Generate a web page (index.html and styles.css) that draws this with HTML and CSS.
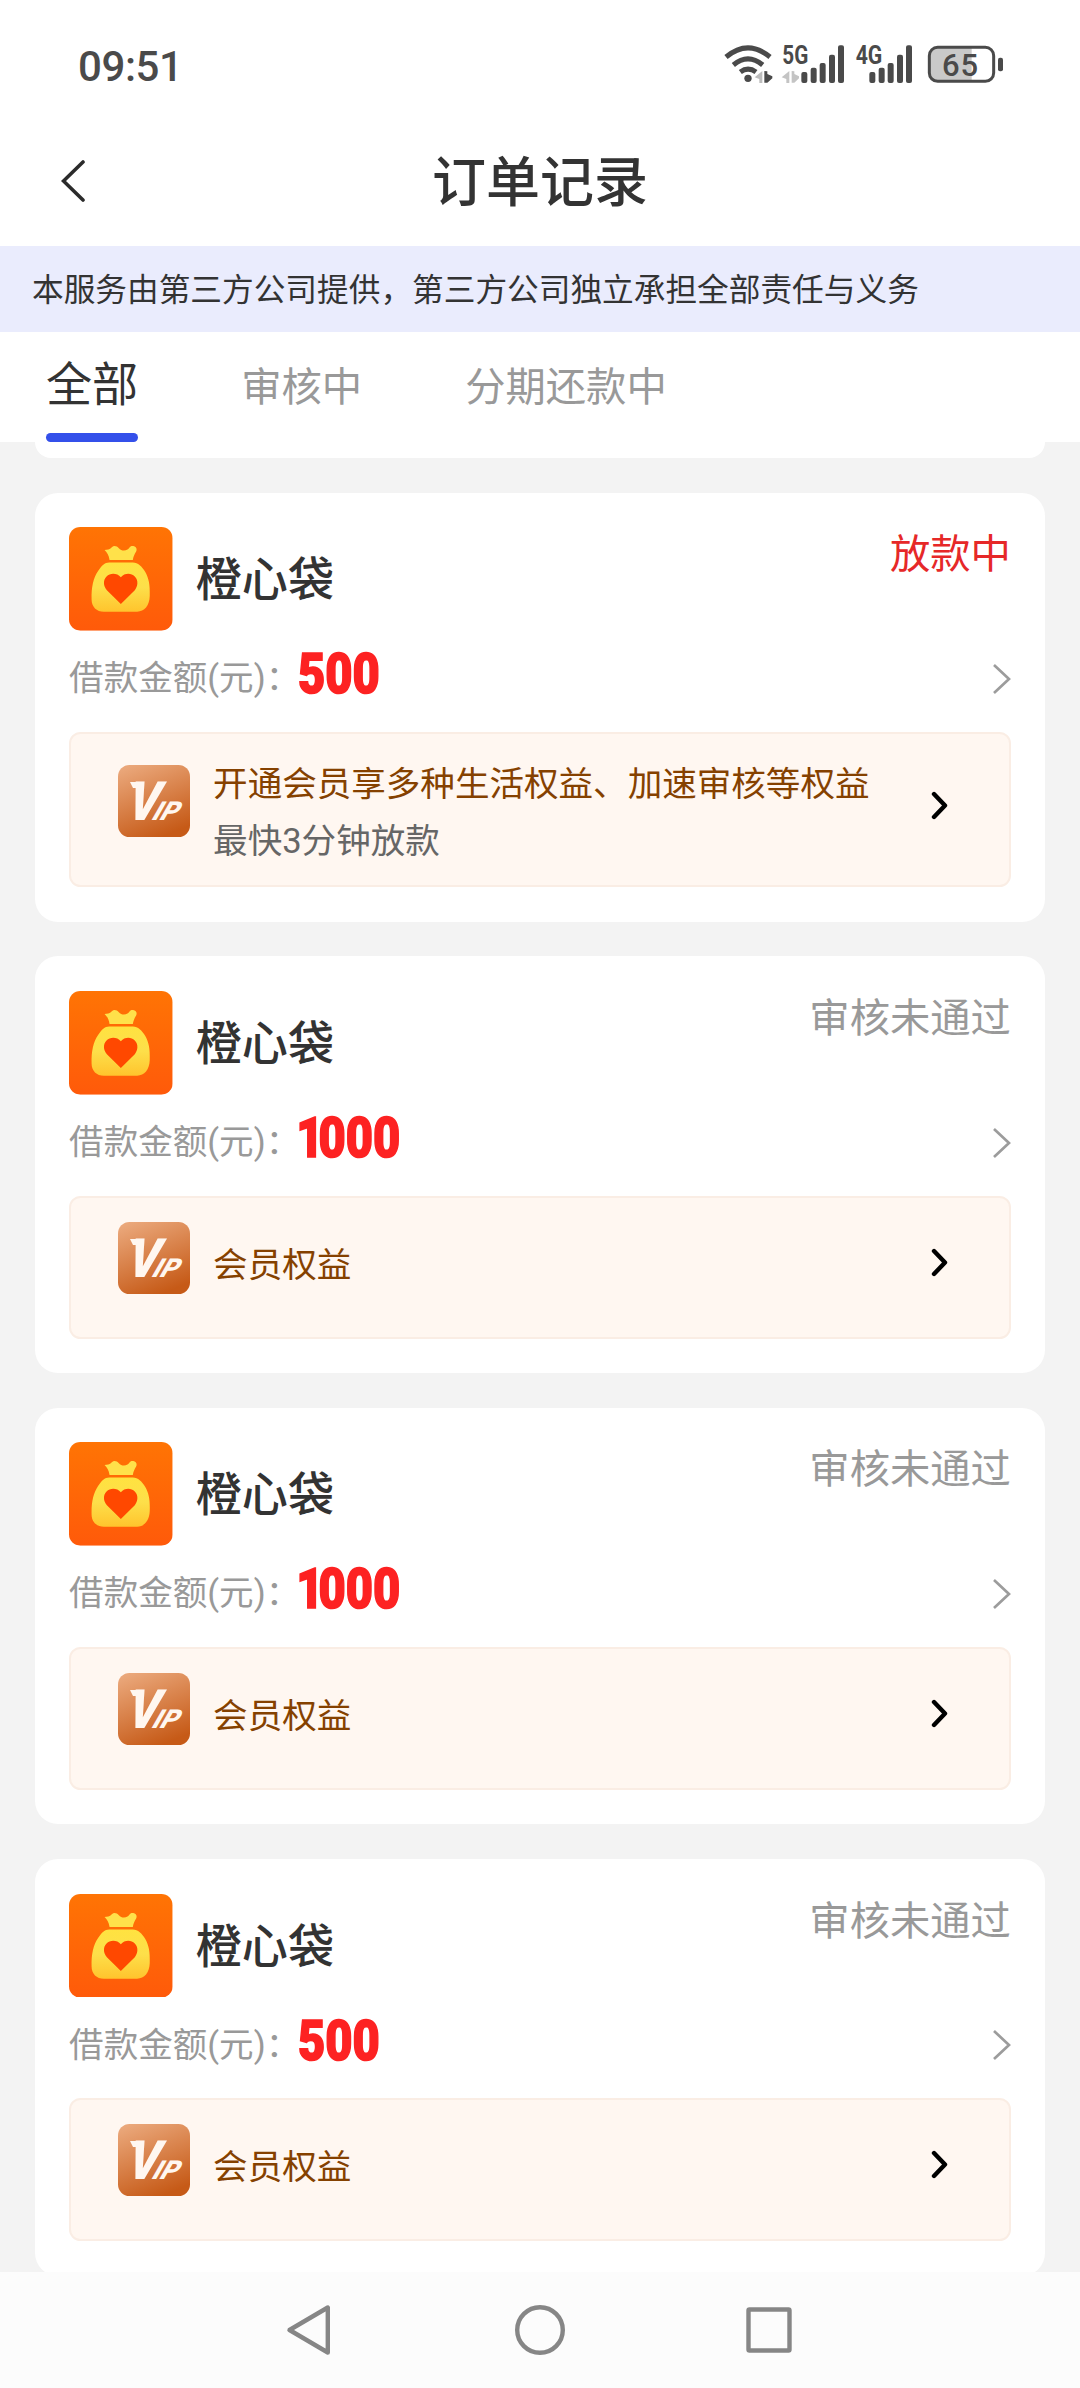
FILE: index.html
```html
<!DOCTYPE html>
<html lang="zh-CN">
<head>
<meta charset="utf-8">
<title>订单记录</title>
<link rel="stylesheet" href="styles.css">
</head>
<body>
<svg class="defs" aria-hidden="true">
  <defs>
    <linearGradient id="bag-bg" x1="0" y1="0" x2="0" y2="1"><stop offset="0" stop-color="#ff7404"/><stop offset="1" stop-color="#ff5a0a"/></linearGradient>
    <linearGradient id="bag-fill" x1="0" y1="0" x2="0" y2="1"><stop offset="0" stop-color="#ffe240"/><stop offset=".5" stop-color="#fddf4a"/><stop offset="1" stop-color="#ffc42d"/></linearGradient>
    <linearGradient id="vip-bg" x1="0.2" y1="0" x2="0.6" y2="1"><stop offset="0" stop-color="#eaa77a"/><stop offset="1" stop-color="#c65a17"/></linearGradient>
  </defs>
  <symbol id="bag" viewBox="0 0 312 312">
    <rect width="312" height="312" rx="34" fill="url(#bag-bg)"/>
    <path d="M107 69C115 69 122 68 129 61C135 55 144 57 150 64C157 72 168 73 176 68C183 63 183 56 193 57C202 58 206 66 202 74C197 82 194 89 192 99H122C120 85 115 77 107 69Z" fill="#ffe14a"/>
    <path d="M121 107H192C208 107 219 119 230 136C240 154 244 173 243 208C242 237 227 255 205 255H105C83 255 68 240 68 218C67 182 73 154 88 132C99 116 107 107 121 107Z" fill="url(#bag-fill)"/>
    <path d="M156 232L114 190C103 178 102 160 113 149C124 137 145 138 156 151C167 138 187 137 198 149C209 160 208 178 198 190Z" fill="#ff4800"/>
  </symbol>
  <symbol id="vip" viewBox="0 0 72 72" overflow="visible">
    <rect width="72" height="72" rx="11.5" fill="url(#vip-bg)"/>
    <text class="vip-v" transform="translate(8.5 55) skewX(-9)" textLength="31" lengthAdjust="spacingAndGlyphs">V</text>
    <text class="vip-ip" transform="translate(32 55) skewX(-30)" textLength="25" lengthAdjust="spacingAndGlyphs">IP</text>
    <path d="M12 17h9v6h-6z" fill="#fff7f0"/>
  </symbol>
  <symbol id="go" viewBox="0 0 18 30"><path d="M1 1L16 15L1 29" fill="none" stroke="#9c9c9c" stroke-width="2.7"/></symbol>
  <symbol id="more" viewBox="0 0 18 30"><path d="M3 3L14 14.5L3 26" fill="none" stroke="#000" stroke-width="4.4" stroke-linecap="round" stroke-linejoin="round"/></symbol>
</svg>

<div class="screen">
  <header class="status">
    <span class="clock">09:51</span>
    <svg class="signals" viewBox="0 0 990 210">
      <g fill="none" stroke="#4a4a4a" stroke-width="15">
        <path d="M78 81Q144 26 210 81"/>
        <path d="M100 105Q144 68 188 105"/>
        <path d="M121 126Q144 109 168 126"/>
      </g>
      <circle cx="144" cy="145" r="11" fill="#4a4a4a"/>
      <path d="M187 123V159H178V147L164 142Z" fill="#bdbdbd"/>
      <path d="M193 123L202 124V132L217 139V145L202 158H193Z" fill="#4a4a4a"/>
      <path d="M268 123V159H259V147L245 142ZM275 123L283 124V132L297 139V145L283 158H275Z" fill="#c4c4c4"/>
      <g class="net"><text x="247" y="101" textLength="78" lengthAdjust="spacingAndGlyphs">5G</text><text x="467" y="101" textLength="80" lengthAdjust="spacingAndGlyphs">4G</text></g>
      <g fill="#4a4a4a">
        <rect x="304" y="126" width="18" height="33" rx="6"/><rect x="332" y="113" width="18" height="46" rx="6"/><rect x="359" y="99" width="18" height="60" rx="6"/><rect x="387" y="74" width="18" height="85" rx="6"/><rect x="414" y="46" width="18" height="113" rx="6"/>
        <rect x="508" y="126" width="18" height="33" rx="6"/><rect x="536" y="113" width="18" height="46" rx="6"/><rect x="563" y="99" width="18" height="60" rx="6"/><rect x="591" y="74" width="18" height="85" rx="6"/><rect x="618" y="46" width="18" height="113" rx="6"/>
      </g>
      <path d="M712 52H815V154H712Q688 154 688 130V76Q688 52 712 52Z" fill="#c9c9c9"/>
      <rect x="688" y="52" width="193" height="102" rx="25" fill="none" stroke="#4a4a4a" stroke-width="9"/>
      <rect x="894" y="83" width="15" height="41" rx="6" fill="#4a4a4a"/>
      <text class="battery" x="726" y="138" textLength="108" lengthAdjust="spacing">65</text>
    </svg>
  </header>

  <div class="titlebar">
    <svg class="back" viewBox="0 0 24 42"><path d="M22 2L2.5 21L22 40" fill="none" stroke="#2b2b2b" stroke-width="3.6" stroke-linecap="round"/></svg>
    <h1 class="title">订单记录</h1>
  </div>

  <p class="notice">本服务由第三方公司提供，第三方公司独立承担全部责任与义务</p>

  <nav class="tabs">
    <span class="tab tab-active">全部</span>
    <span class="tab">审核中</span>
    <span class="tab">分期还款中</span>
  </nav>

  <main class="orders">
    <div class="card-tail"></div>

    <section class="card">
      <div class="head"><svg class="logo"><use href="#bag"/></svg><h2 class="name">橙心袋</h2><span class="state state-red">放款中</span></div>
      <div class="amount"><span class="label">借款金额(元)：</span><b class="sum">500</b><svg class="go"><use href="#go"/></svg></div>
      <div class="vip vip-tall"><svg class="badge"><use href="#vip"/></svg><div class="perk"><p>开通会员享多种生活权益、加速审核等权益</p><p class="sub">最快3分钟放款</p></div><svg class="more"><use href="#more"/></svg></div>
    </section>

    <section class="card">
      <div class="head"><svg class="logo"><use href="#bag"/></svg><h2 class="name">橙心袋</h2><span class="state">审核未通过</span></div>
      <div class="amount"><span class="label">借款金额(元)：</span><b class="sum"><span class="one">1</span>000</b><svg class="go"><use href="#go"/></svg></div>
      <div class="vip"><svg class="badge"><use href="#vip"/></svg><div class="perk"><p>会员权益</p></div><svg class="more"><use href="#more"/></svg></div>
    </section>

    <section class="card">
      <div class="head"><svg class="logo"><use href="#bag"/></svg><h2 class="name">橙心袋</h2><span class="state">审核未通过</span></div>
      <div class="amount"><span class="label">借款金额(元)：</span><b class="sum"><span class="one">1</span>000</b><svg class="go"><use href="#go"/></svg></div>
      <div class="vip"><svg class="badge"><use href="#vip"/></svg><div class="perk"><p>会员权益</p></div><svg class="more"><use href="#more"/></svg></div>
    </section>

    <section class="card">
      <div class="head"><svg class="logo"><use href="#bag"/></svg><h2 class="name">橙心袋</h2><span class="state">审核未通过</span></div>
      <div class="amount"><span class="label">借款金额(元)：</span><b class="sum">500</b><svg class="go"><use href="#go"/></svg></div>
      <div class="vip"><svg class="badge"><use href="#vip"/></svg><div class="perk"><p>会员权益</p></div><svg class="more"><use href="#more"/></svg></div>
    </section>
  </main>

  <footer class="sysnav">
    <svg class="sysicons" viewBox="0 0 510 54" fill="none" stroke="#868686" stroke-width="4.4" stroke-linejoin="round">
      <path d="M42.8 4.5V49.5L4.5 27Z"/>
      <circle cx="255" cy="27" r="22.8"/>
      <rect x="463.5" y="6.5" width="41" height="41" rx="1"/>
    </svg>
  </footer>
</div>
</body>
</html>
```
FILE: styles.css
```css
* { box-sizing: border-box; margin: 0; padding: 0; }

body {
  background: #f3f3f3;
  color: #333;
  font-family: Roboto, "Noto Sans CJK SC", sans-serif;
}

svg { display: block; flex: none; }
.defs { position: absolute; width: 0; height: 0; }

.screen { display: flex; flex-direction: column; width: 1080px; height: 2388px; overflow: hidden; }

/* system status bar */
.status { display: flex; justify-content: space-between; height: 118px; padding: 30px 50px 0 78px; background: #fff; }
.clock { height: 72px; font-size: 42px; font-weight: 500; line-height: 74px; letter-spacing: -0.4px; color: #4a4a4a; }
.signals { width: 330px; height: 70px; }
.net { font: 700 76px Roboto, sans-serif; fill: #4a4a4a; }
.battery { font: 500 93px Roboto, sans-serif; fill: #4a4a4a; }

/* page title */
.titlebar { display: grid; grid-template-columns: 100px 1fr 100px; align-items: center; height: 128px; padding: 0 61px; background: #fff; }
.back { width: 24px; height: 42px; margin-top: -2px; }
.title { padding-top: 4px; font-size: 54px; font-weight: 500; line-height: 64px; text-align: center; white-space: nowrap; }

.notice { height: 86px; padding-left: 32px; background: #eaecfd; font-size: 31.68px; line-height: 89px; }

/* filter tabs */
.tabs { display: flex; gap: 103px; height: 110px; padding-left: 46px; background: #fff; }
.tab { height: 110px; font-size: 40.32px; line-height: 111px; color: #999; }
.tab-active { display: flex; flex-direction: column; justify-content: space-between; font-size: 46.08px; line-height: 101px; padding-top: 3px; color: #333; }
.tab-active::after { content: ""; flex: none; height: 9px; margin-top: -3px; border-radius: 4.5px; background: #3450ea; }

/* order list */
.orders { display: flex; flex: 1; flex-direction: column; gap: 34.56px; min-height: 0; padding: 0 34.56px; overflow: hidden; }
.card-tail { flex: none; height: 16px; border-radius: 0 0 23px 23px; background: #fff; }
.card { flex: none; padding: 34.56px; border-radius: 23px; background: #fff; }

.head { display: flex; height: 103.68px; }
.logo { width: 103.68px; height: 103.68px; }
.name { flex: 1; padding-left: 23px; font-size: 46.08px; font-weight: 500; line-height: 106px; }
.state { font-size: 40.32px; line-height: 56px; color: #999; }
.state-red { color: #e62828; }

.amount { display: flex; align-items: center; height: 101px; padding-bottom: 7px; }
.label { width: 229px; padding-top: 1px; font-size: 34.56px; line-height: 50px; color: #999; white-space: nowrap; }
.sum { transform: scaleX(0.84); transform-origin: 0 50%; color: #fd2222; font-size: 56px; font-weight: 900; line-height: 50px; padding-bottom: 7px; -webkit-text-stroke: 1.6px #fd2222; }
.one { margin: 0 -6px 0 -2px; }
.go { width: 18px; height: 30px; margin: 2px 0 0 auto; }

.vip { display: flex; height: 143px; padding: 24px 60px 0 47px; border: 2px solid #faede4; border-radius: 11.5px; background: #fff7f1; }
.vip-tall { height: 155.5px; padding-top: 31px; }
.badge { width: 72px; height: 72px; }
.perk { flex: 1; padding: 15px 0 0 23px; font-size: 34.56px; line-height: 57.6px; color: #854100; white-space: nowrap; }
.vip-tall .perk { padding-top: 0; margin-top: -9px; }
.sub { color: #666; }
.more { width: 18px; height: 30px; margin-top: 26px; }
.vip-v { font: italic 900 54px Roboto, sans-serif; fill: #fff7f0; }
.vip-ip { font: 900 26px Roboto, sans-serif; fill: #fff7f0; }

/* system navigation */
.sysnav { display: flex; flex: none; justify-content: center; height: 116px; padding-top: 31px; background: #fcfcfc; }
.sysicons { width: 510px; height: 54px; }
```
